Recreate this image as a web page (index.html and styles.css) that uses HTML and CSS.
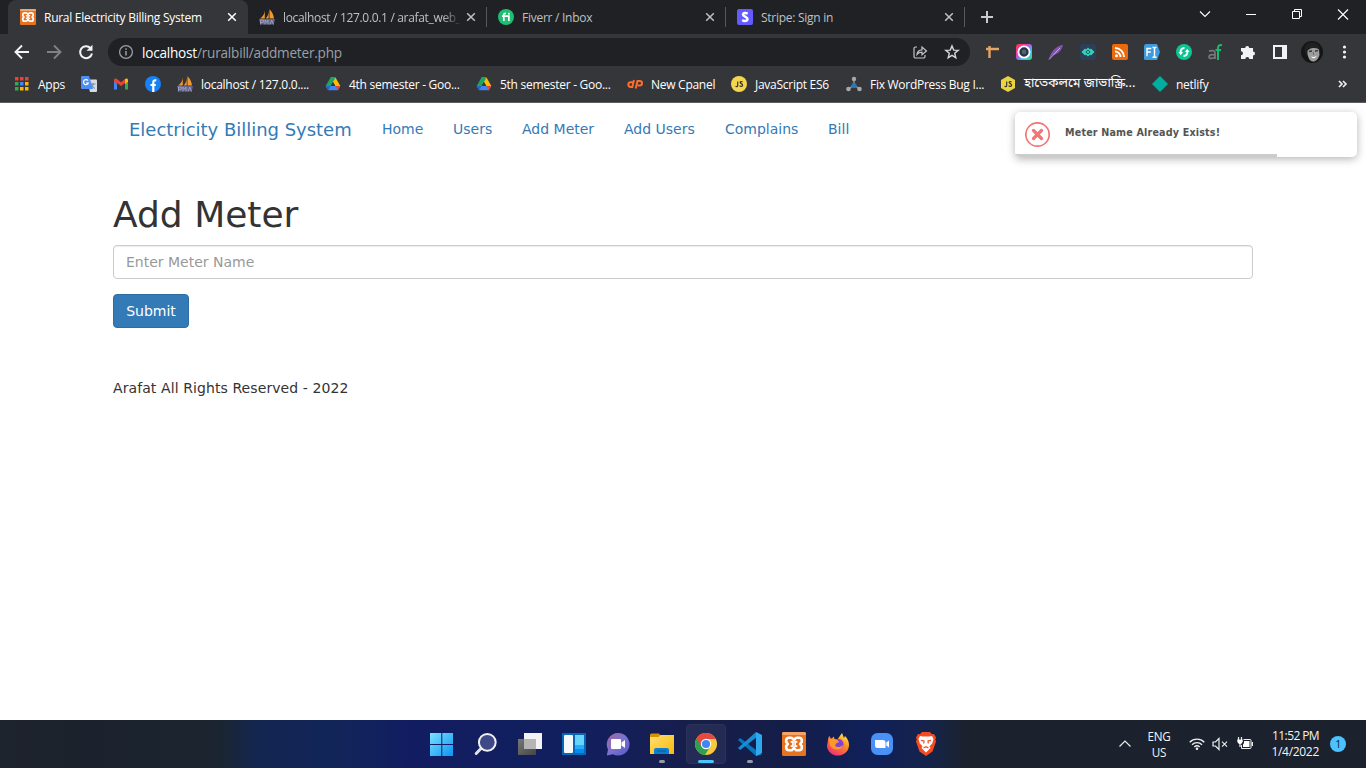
FILE: index.html
```html
<!DOCTYPE html>
<html lang="en">
<head>
<meta charset="utf-8">
<title>Rural Electricity Billing System</title>
<link rel="stylesheet" href="styles.css">
</head>
<body>
<svg class="defs" width="0" height="0">
  <defs>
    <linearGradient id="win" x1="0" y1="0" x2="1" y2="1"><stop offset="0" stop-color="#7be3ff"/><stop offset="1" stop-color="#0a94f2"/></linearGradient>
    <linearGradient id="chat" x1="0" y1="0" x2="1" y2="1"><stop offset="0" stop-color="#a4669a"/><stop offset=".5" stop-color="#7a72d0"/><stop offset="1" stop-color="#5058c8"/></linearGradient>
    <linearGradient id="folder" x1="0" y1="0" x2="1" y2="1"><stop offset="0" stop-color="#ffdf73"/><stop offset="1" stop-color="#f9b90c"/></linearGradient>
    <linearGradient id="fox" x1=".8" y1="0" x2=".2" y2="1"><stop offset="0" stop-color="#fff04a"/><stop offset=".4" stop-color="#ff8b22"/><stop offset="1" stop-color="#f0287a"/></linearGradient>
    <linearGradient id="cam" x1="0" y1="0" x2="1" y2="1"><stop offset="0" stop-color="#ff3b30"/><stop offset=".35" stop-color="#f235c8"/><stop offset=".65" stop-color="#32b8ff"/><stop offset="1" stop-color="#3fe07a"/></linearGradient>
    <linearGradient id="task" x1="0" y1="0" x2="1" y2="1"><stop offset="0" stop-color="#777"/><stop offset="1" stop-color="#444"/></linearGradient>
    <symbol id="xampp" viewBox="0 0 16 16"><rect width="16" height="16" rx="1" fill="#e8731f"/><rect width="16" height="2" rx="1" fill="#f6a366"/><path d="M8 5.500L7 4.300a1.500 1.500 0 0 0-1.200-.5H4.600a1.800 1.800 0 0 0-1.800 1.800v1L3.900 8l-1.100 1.400v1a1.800 1.800 0 0 0 1.800 1.800h1.200A1.500 1.500 0 0 0 7 11.700l1-1.200 1 1.200a1.500 1.500 0 0 0 1.200.5h1.200a1.800 1.800 0 0 0 1.800-1.800v-1L12.100 8l1.100-1.400v-1a1.800 1.800 0 0 0-1.800-1.800h-1.200a1.500 1.500 0 0 0-1.200.5z" fill="none" stroke="#fff" stroke-width="1.700" stroke-linejoin="round"/><path d="M5.800 6.600h1.500v2.800H5.800M10.200 6.600H8.700v2.800h1.500" fill="none" stroke="#fff" stroke-width="1.100"/></symbol>
    <symbol id="pma" viewBox="0 0 16 16"><path d="M5.800 1.500v8H1C4 7.500 5.500 5 5.800 1.500zM10.500.2c2.600 2.500 4.200 6 4.500 9.300h-4.500zM9.700 2v7.500H6.600C8.700 7.500 9.500 5 9.700 2z" fill="#f29a2e"/><path d="M0 10h16l-1.300 5.500H1.500z" fill="#62648c"/><path d="M1.500 15.500V11h2.800v2.300H1.500M6 15.500V11l1.500 2.200L9 11v4.500m2 0 1.700-4.500 1.800 4.500" fill="none" stroke="#a9aacb" stroke-width=".8"/></symbol>
    <symbol id="drive" viewBox="0 0 16 16"><path d="M5.500 1.500h5L15.300 10h-5L8 6z" fill="#fbbc04"/><path d="M3.200 10h12.100l-2.500 4.200H3.200L.7 10z" fill="#4285f4"/><path d="M5.500 1.500.7 10l2.500 4 2.400-4L8 6l2.500-4.500z" fill="#1ea362"/><path d="M10.400 10h4.900l-2.500 4.200z" fill="#ea4335"/><path d="M.7 10h4.900l-2.400 4.200z" fill="#2366d1"/><path d="M8 6.300 10.200 10H5.800z" fill="#35363a"/></symbol>
    <symbol id="close" viewBox="0 0 10 10"><path d="M1.200 1.200l7.600 7.600m0-7.600L1.200 8.800" stroke="currentColor" stroke-width="1.500" fill="none"/></symbol>
  </defs>
</svg>

<header class="browser">
  <div class="tabstrip">
    <div class="tab tab-active"><svg class="i16"><use href="#xampp"/></svg><span class="tab-title">Rural Electricity Billing System</span><svg class="tab-close"><use href="#close"/></svg></div>
    <div class="tab"><svg class="i16"><use href="#pma"/></svg><span class="tab-title tab-faded">localhost / 127.0.0.1 / arafat_web_</span><svg class="tab-close"><use href="#close"/></svg></div>
    <div class="tab"><svg class="i16" viewBox="0 0 16 16"><circle cx="8" cy="8" r="8" fill="#1dbf73"/><path d="M4 7.200h6.900V12M5.800 12V6c0-1.300.7-1.700 2.200-1.600" fill="none" stroke="#fff" stroke-width="1.700"/><circle cx="10.900" cy="4.700" r="1" fill="#fff"/></svg><span class="tab-title">Fiverr / Inbox</span><svg class="tab-close"><use href="#close"/></svg></div>
    <div class="tab"><svg class="i16" viewBox="0 0 16 16"><rect width="16" height="16" rx="2" fill="#635bff"/><path d="M10.700 4.600C8.800 3.800 6.100 3.700 6 5.500c0 2.200 4.600 1.900 4.500 4.500-.1 2.300-3.100 2.300-5.300 1.200" fill="none" stroke="#fff" stroke-width="2.500"/></svg><span class="tab-title">Stripe: Sign in</span><svg class="tab-close"><use href="#close"/></svg></div>
    <svg class="new-tab" viewBox="0 0 12 12"><path d="M6 0v12M0 6h12" stroke="#c8cacd" stroke-width="2"/></svg>
    <div class="window-controls">
      <svg viewBox="0 0 46 28"><path d="M18 11.500l5 5 5-5" fill="none" stroke="#fff" stroke-width="1.100"/></svg>
      <svg viewBox="0 0 46 28"><path d="M18 14.500h10" stroke="#fff"/></svg>
      <svg viewBox="0 0 46 28"><path d="M18.500 11.500h7v7h-7zM20.500 11.500v-2h7v7h-2" fill="none" stroke="#fff"/></svg>
      <svg viewBox="0 0 46 28"><path d="M18 9.500l10 10m0-10l-10 10" stroke="#fff" stroke-width="1.100"/></svg>
    </div>
  </div>

  <div class="toolbar">
    <div class="nav-buttons">
      <svg viewBox="0 0 32 28"><path d="M23 14H10M16 7.500L9.500 14l6.500 6.500" fill="none" stroke="#f1f3f4" stroke-width="1.900"/></svg>
      <svg viewBox="0 0 32 28"><path d="M9 14h13M16 7.500l6.500 6.500-6.500 6.500" fill="none" stroke="#808184" stroke-width="1.900"/></svg>
      <svg viewBox="0 0 32 28"><path d="M20.500 10A6 6 0 1 0 22 15.500" fill="none" stroke="#f1f3f4" stroke-width="2"/><path d="M22.500 6.800v6h-6z" fill="#f1f3f4"/></svg>
    </div>
    <div class="omnibox">
      <svg class="i16" viewBox="0 0 16 16"><circle cx="8" cy="8" r="6.400" fill="none" stroke="#9aa0a6" stroke-width="1.300"/><path d="M8 7v4.500M8 4.300v1.500" stroke="#9aa0a6" stroke-width="1.500"/></svg>
      <span class="url"><b>localhost</b>/ruralbill/addmeter.php</span>
      <svg class="i16" viewBox="0 0 16 16"><path d="M5 3H3.500A1.500 1.500 0 0 0 2 4.500v8A1.500 1.500 0 0 0 3.500 14h8a1.500 1.500 0 0 0 1.500-1.500V11M5 10.500C5.300 7.500 7 6 10 5.800V3l4.500 4-4.500 3.700V8.200C7.700 8.200 6.200 8.900 5 10.500z" fill="none" stroke="#c4c6c9" stroke-width="1.200"/></svg>
      <svg class="i16 star" viewBox="0 0 16 16"><path d="M8 1.900l1.700 4.200 4.500.3-3.500 2.900 1.100 4.400L8 11.300l-3.800 2.400 1.100-4.400-3.500-2.900 4.500-.3z" fill="none" stroke="#d5d7da" stroke-width="1.400"/></svg>
    </div>
    <div class="extensions">
      <svg viewBox="0 0 16 16"><path d="M2 5h13M5.500 2v12" stroke="#e6a366" stroke-width="2.400"/></svg>
      <svg viewBox="0 0 16 16"><rect width="16" height="16" rx="3" fill="url(#cam)"/><circle cx="8" cy="8" r="5.600" fill="#26344a" stroke="#fff" stroke-width="1.900"/><circle cx="8" cy="8" r="2.400" fill="#56616e"/></svg>
      <svg viewBox="0 0 16 16"><path d="M1 15.500C2 9 7 2.500 15 .8 14 6.500 9.500 11 4 11.300z" fill="#8453ad"/><path d="M1 15.500L12 4" stroke="#d0a8ec"/></svg>
      <svg viewBox="0 0 16 16"><rect width="16" height="16" rx="2" fill="#2b4058"/><path d="M5.500 5L2.500 8l3 3m5-6l3 3-3 3M8 4.500L4.500 8 8 11.500 11.500 8z" fill="none" stroke="#33dfbd" stroke-width="1.300"/><path d="M8 6.500L9.500 8 8 9.500 6.500 8z" fill="#33dfbd"/></svg>
      <svg viewBox="0 0 16 16"><rect width="16" height="16" rx="2" fill="#ec6a0c"/><path d="M3 7.500A5.500 5.500 0 0 1 8.500 13M3 4a9 9 0 0 1 9 9" fill="none" stroke="#fff" stroke-width="1.900"/><circle cx="4.500" cy="11.700" r="1.500" fill="#fff"/></svg>
      <svg viewBox="0 0 16 16"><path d="M1.500 0H13l3 8-3 8H1.500A1.500 1.500 0 0 1 0 14.500v-13z" fill="#3e9bdd"/><path d="M3 12.200V4.500h4.300M3 8h3.800M8.500 3.200c1.500 0 2 .8 2 1.500 0-.7.500-1.500 2-1.500m-2 1.500v7.600m-2 1c1.500 0 2-.4 2-1 0 .6.500 1 2 1" fill="none" stroke="#fff" stroke-width="1.400"/></svg>
      <svg viewBox="0 0 16 16"><circle cx="8" cy="8" r="8" fill="#0cc592"/><path d="M8.500 4C5.500 4 4.300 6 4.700 8.500M7.500 12c3 0 4.200-2 3.800-4.500" fill="none" stroke="#fff" stroke-width="1.900"/><path d="M2.500 8h4.600l-2.300 3.200zM8.900 8h4.600l-2.300-3.200z" fill="#fff"/></svg>
      <svg viewBox="0 0 16 16"><path d="M1 7.300c2.500-1.300 6-1 6 1.400V15m0-4C3.500 10.200 1 10.800 1 12.700c0 2.300 4 2.300 6 .3" fill="none" stroke="#77797c" stroke-width="1.700"/><path d="M14 1.300c-3.200-.7-4 .7-4 3V16M7.500 6H13" fill="none" stroke="#16ba6d" stroke-width="2"/></svg>
      <svg viewBox="0 0 16 16"><path d="M1 4h4.200a2 2 0 1 1 4 0H13v3.600a2 2 0 1 1 0 4V15H9.300a2 2 0 1 0-4 0H1v-3.700a2 2 0 1 0 0-4z" fill="#f1f3f4"/></svg>
      <svg viewBox="0 0 16 16"><path d="M2 2h12v12H2z" fill="none" stroke="#f1f3f4" stroke-width="2"/><path d="M10 2h4v12h-4z" fill="#f1f3f4"/></svg>
      <svg class="avatar" viewBox="0 0 22 22"><circle cx="11" cy="11" r="11" fill="#151515"/><path d="M6 8c2-2 9-3 12 0l.5 6c-1 4-4 7-7 6.500C8 20 6 14 6 8z" fill="#9d9d9d"/><path d="M4 11C2 3 8 1 12 1.500S19.500 5 19 10c-1-2-3-3-5.500-3S8 7.500 6.500 10l-.5 4z" fill="#202020"/><path d="M8 10.500l3-.5m3 0l3-.3" stroke="#333" stroke-width="1.300"/><path d="M12.500 11v3" stroke="#707070"/><path d="M10 15.500c2 .8 4 .5 5.500-.8-.8 2.800-3.500 3.600-5.500.8z" fill="#fff"/></svg>
      <svg viewBox="0 0 16 16"><circle cx="8.500" cy="3" r="1.600" fill="#f1f3f4"/><circle cx="8.500" cy="8" r="1.600" fill="#f1f3f4"/><circle cx="8.500" cy="13" r="1.600" fill="#f1f3f4"/></svg>
    </div>
  </div>

  <nav class="bookmarks">
    <a class="bm"><svg class="i16" viewBox="0 0 16 16"><path d="M1 1h3.500v3.500H1z M6 1h3.500v3.500H6z M11 1h3.500v3.500H11z" fill="#ea4335"/><path d="M1 6h3.500v3.500H1z M1 11h3.500v3.500H1z" fill="#34a853"/><path d="M6 6h3.500v3.500H6z" fill="#4285f4"/><path d="M11 6h3.500v3.500H11z M6 11h3.500v3.500H6z M11 11h3.500v3.500H11z" fill="#fbb606"/></svg><span>Apps</span></a>
    <a class="bm"><svg class="i16" viewBox="0 0 16 16"><path d="M6 3.500h9a1 1 0 0 1 1 1V15a1 1 0 0 1-1 1H9z" fill="#d8dadd"/><path d="M9.500 8h5M12 7v1c0 2-1 3.500-2 4.500m.5-4c.5 1.500 2 3 3.500 4" fill="none" stroke="#6c8da0"/><path d="M1 0h7l4 13H1a1 1 0 0 1-1-1V1a1 1 0 0 1 1-1z" fill="#4d8df5"/><path d="M7 4.600A2.500 2.500 0 1 0 7.300 7H5" fill="none" stroke="#fff" stroke-width="1.200"/></svg></a>
    <a class="bm"><svg class="i16" viewBox="0 0 16 16"><path d="M1 4v9.500h3V6z" fill="#4285f4"/><path d="M12 6v7.500h3V4z" fill="#34a853"/><path d="M1 4c0-1.500 1.500-2 3-1l4 3.200L12 3v4L8 10 4 7v1L1 5.700z" fill="#ea4335"/><path d="M12 3c1.500-1 3-.5 3 1v1.700L12 8z" fill="#fbbc04"/></svg></a>
    <a class="bm"><svg class="i16" viewBox="0 0 16 16"><circle cx="8" cy="8" r="8" fill="#1682f3"/><path d="M8.300 16V6.500c0-1.700.9-2.500 3-2.200M5.500 9h5.300" fill="none" stroke="#fff" stroke-width="2.200"/></svg></a>
    <a class="bm"><svg class="i16"><use href="#pma"/></svg><span>localhost / 127.0.0....</span></a>
    <a class="bm"><svg class="i16"><use href="#drive"/></svg><span>4th semester - Goo...</span></a>
    <a class="bm"><svg class="i16"><use href="#drive"/></svg><span>5th semester - Goo...</span></a>
    <a class="bm"><svg class="i16" viewBox="0 0 16 16"><path d="M6 6.200H3.700a2.300 2.300 0 0 0 0 4.700h1.600L7 4M8.700 12.500L10.500 5h2.200a2.300 2.300 0 0 1 0 4.600h-2" fill="none" stroke="#ff6c2c" stroke-width="2"/></svg><span>New Cpanel</span></a>
    <a class="bm"><svg class="i16" viewBox="0 0 16 16"><circle cx="8" cy="8" r="8" fill="#f4d64e"/><path d="M6.700 5.500v4c0 1.500-1.500 1.500-2 .5M11.500 6c-1-.8-2.500-.4-2.300.6.200 1.200 2.500.8 2.400 2.500-.1 1.500-2 1.500-3 .5" fill="none" stroke="#333" stroke-width="1.200"/></svg><span>JavaScript ES6</span></a>
    <a class="bm"><svg class="i16" viewBox="0 0 16 16"><path d="M8 3v6l-5.500 4M8 9l5.500 4" fill="none" stroke="#888c91" stroke-width="1.500"/><circle cx="8" cy="3" r="2.200" fill="#a6a9ac"/><circle cx="2.500" cy="13" r="2.300" fill="#a6a9ac"/><circle cx="13.500" cy="13" r="2.300" fill="#a6a9ac"/><circle cx="8" cy="9.500" r="2.600" fill="#2879b9"/></svg><span>Fix WordPress Bug I...</span></a>
    <a class="bm"><svg class="i16" viewBox="0 0 16 16"><path d="M8 0l7 4v8l-7 4-7-4V4z" fill="#ead341"/><path d="M6.700 5.500v4c0 1.500-1.500 1.500-2 .5M11.500 6c-1-.8-2.500-.4-2.300.6.200 1.200 2.500.8 2.400 2.500-.1 1.500-2 1.500-3 .5" fill="none" stroke="#333" stroke-width="1.200"/></svg><span class="bengali" lang="bn">হাতেকলমে জাভাস্ক্রি...</span></a>
    <a class="bm"><svg class="i16" viewBox="0 0 16 16"><path d="M8 0l8 8-8 8-8-8z" fill="#00ad9f"/></svg><span>netlify</span></a>
    <a class="bm"><svg class="more" viewBox="0 0 10 10"><path d="M1 2l3 3-3 3m4-6l3 3-3 3" fill="none" stroke="#f1f3f4" stroke-width="1.600"/></svg></a>
  </nav>
</header>

<main class="page">
  <div class="container">
    <nav class="navbar">
      <a class="brand">Electricity Billing System</a>
      <a class="nl-home">Home</a><a class="nl-users">Users</a><a class="nl-meter">Add Meter</a><a class="nl-add">Add Users</a><a class="nl-comp">Complains</a><a>Bill</a>
    </nav>
    <h1 class="title">Add Meter</h1>
    <form class="meter-form">
      <input class="field" type="text" placeholder="Enter Meter Name">
      <button class="submit" type="button">Submit</button>
    </form>
    <footer class="copyright">Arafat All Rights Reserved - 2022</footer>
  </div>
  <aside class="toast">
    <svg class="toast-icon" viewBox="0 0 26 26"><circle cx="12.500" cy="12.500" r="11.700" fill="none" stroke="#f27474" stroke-width="1.700"/><path d="M8.500 8.500l8 8m0-8l-8 8" stroke="#f27474" stroke-width="3.200" stroke-linecap="round"/></svg>
    <span class="toast-text">Meter Name Already Exists!</span>
    <div class="toast-progress"></div>
  </aside>
</main>

<footer class="taskbar">
  <div class="apps">
    <div class="app"><svg viewBox="0 0 24 24"><path d="M0 1h11.300v11H0zM12.300 1H23v11H12.300zM0 13h11.300v11H0zM12.300 13H23v11H12.300z" fill="url(#win)"/></svg></div>
    <div class="app"><svg viewBox="0 0 24 24"><path d="M7.500 16L2.200 21.500" stroke="#dfe2e6" stroke-width="3" stroke-linecap="round"/><circle cx="13.300" cy="10.300" r="8.400" fill="#404987" stroke="#eef0f2" stroke-width="2"/></svg></div>
    <div class="app"><svg viewBox="0 0 24 24"><path d="M6 1h18v16H6z" fill="#f3f3f3"/><path d="M0 7h18v16H0z" fill="url(#task)"/><path d="M6 7h12v10H6z" fill="#b5b5b5"/></svg></div>
    <div class="app"><svg viewBox="0 0 24 24"><rect y="1" width="24" height="22" rx="1" fill="#0768b8"/><rect x="2" y="3" width="9" height="18" rx="1" fill="#f5f7f9"/><path d="M13 3h9v10h-9z" fill="#66d4ff"/><path d="M13 13h9v8h-9z" fill="#078bec"/><path d="M13 13h9v4h-9z" fill="#20adff"/></svg></div>
    <div class="app"><svg viewBox="0 0 24 24"><path d="M12 1a11.300 11.300 0 1 1-5 21.300L.8 23.500 2 17.500A11.300 11.300 0 0 1 12 1z" fill="url(#chat)"/><rect x="5" y="7" width="10" height="10" rx="1" fill="#fff"/><path d="M15.500 10.500L19 8v8l-3.500-2.500z" fill="#fff"/></svg></div>
    <div class="app running"><svg viewBox="0 0 24 24"><path d="M0 3a1.500 1.500 0 0 1 1.500-1.500H9L11 4v3H0z" fill="#d99300"/><path d="M0 5h8.500l2-2H24v19H0z" fill="url(#folder)"/><path d="M4 22v-4a2 2 0 0 1 2-2h11a2 2 0 0 1 2 2v4z" fill="#0b7ed0"/><path d="M7 19h9" stroke="#0569ae" stroke-width="1.500"/></svg></div>
    <div class="app focused"><svg viewBox="0 0 24 24"><circle cx="12" cy="12" r="11" fill="#fbc73c"/><path d="M12 12L2.500 6.500A11 11 0 0 0 11 23l5.500-9z" fill="#2ca04f"/><path d="M2.500 6.500A11 11 0 0 1 21.800 7H12l-4.400 7.500z" fill="#e44a3f"/><circle cx="12" cy="12" r="5.200" fill="#fff"/><circle cx="12" cy="12" r="4.100" fill="#4285f4"/></svg></div>
    <div class="app running"><svg viewBox="0 0 24 24"><path d="M0 8l2.200-2L24 22.500 18 24z" fill="#0877bd"/><path d="M0 16l2.200 2L19 5 18 0z" fill="#168ed4"/><path d="M18 0l6 3v18l-6 3z" fill="#2fa9ee"/></svg></div>
    <div class="app"><svg viewBox="0 0 16 16"><use href="#xampp"/></svg></div>
    <div class="app"><svg viewBox="0 0 24 24"><path d="M2 8c0-2 .7-3 1.500-4L5 7l3-2.500.5 3L11 8l5-7 2 5 1-2c4 4 5 9 3 13.500C17 27 2 25 1 14z" fill="url(#fox)"/><circle cx="12.500" cy="12" r="5" fill="#8541d3"/><path d="M3 7c5-1 9 0 10 3l-3 1.500-1 2.500c3 2 6 1 8-1-1 6-11 6-13 0z" fill="#ff982b"/></svg></div>
    <div class="app"><svg viewBox="0 0 24 24"><rect x="1" y="1" width="22" height="22" rx="6.500" fill="#4990f7"/><path d="M5 8h8a2.500 2.500 0 0 1 2.500 2.500V16H7.500A2.500 2.500 0 0 1 5 13.500z" fill="#fff"/><path d="M16.300 10.500L19 8.500v7l-2.700-2z" fill="#fff"/></svg></div>
    <div class="app"><svg viewBox="0 0 24 24"><path d="M8 0h8l2 2.200 2-.2 2 3.500-.7 2 .7 2-3.500 10L12 24l-6.500-4.500L2 9.500l.7-2-.7-2L4 2l2 .2z" fill="#f64b20"/><path d="M9 4.500h6l3-.5 1.500 3-1.300 4.500-2.700 2.700 1 1.800L12 20.500 7.500 16l1-1.800-2.700-2.700L4.500 7 6 4z" fill="#fff"/><path d="M7 8.300l3 .7-.3 2.500M17 8.300l-3 .7.3 2.500M9.500 16l2.500-1.300 2.500 1.300" fill="none" stroke="#f64b20" stroke-width="1.200"/></svg></div>
  </div>
  <div class="tray">
    <svg class="tray-chev" viewBox="0 0 14 10"><path d="M1.500 7.500L7 2l5.500 5.500" fill="none" stroke="#eee" stroke-width="1.200"/></svg>
    <div class="lang">ENG<br>US</div>
    <svg class="tray-wifi" viewBox="0 0 16 14"><path d="M.7 5.200a10.200 10.200 0 0 1 14.600 0M3 7.700a7 7 0 0 1 10 0M5.300 10a4 4 0 0 1 5.400 0" fill="none" stroke="#eee" stroke-width="1.300"/><circle cx="8" cy="11.700" r="1.300" fill="#eee"/></svg>
    <svg class="tray-vol" viewBox="0 0 16 14"><path d="M1 5h2.500L7 1.500v11L3.500 9H1z" fill="none" stroke="#eee" stroke-width="1.200"/><path d="M10 4.700l5 5m0-5l-5 5" stroke="#eee" stroke-width="1.100"/></svg>
    <svg class="tray-bat" viewBox="0 0 17 14"><path d="M6.500 2.500H13a1 1 0 0 1 1 1v7a1 1 0 0 1-1 1H4.500V8" fill="none" stroke="#eee"/><path d="M7 4h5.500v6H6V7.500L7 6z" fill="#fff"/><path d="M15.300 5v4" stroke="#eee" stroke-width="1.400"/><path d="M1.500 0v3m3-3v3M3 6v4" stroke="#eee" stroke-width="1.200" fill="none"/><path d="M.3 2.500h5.400V5L4 7H2L.3 5z" fill="#fff"/></svg>
    <div class="clock"><div class="time">11:52 PM</div><div class="date">1/4/2022</div></div>
    <div class="count">1</div>
  </div>
</footer>
</body>
</html>
```
FILE: styles.css
```css
* { box-sizing: border-box; }
body {
  margin: 0;
  width: 1366px;
  height: 768px;
  overflow: hidden;
  display: flex;
  flex-direction: column;
  background: #fff;
  font-family: "Open Sans", "Noto Sans", sans-serif;
}
.defs { position: absolute; }
svg { display: block; flex: none; }
.i16 { width: 16px; height: 16px; }

/* Browser chrome */
.browser { flex: none; height: 103px; background: #35363a; border-bottom: 1px solid #5b5c60; }
.tabstrip { height: 34px; background: #202124; display: flex; padding-left: 8px; }
.tab {
  width: 239px;
  height: 34px;
  display: flex;
  align-items: center;
  padding: 0 10px 0 12px;
  color: #bdc1c6;
}
.tab + .tab { position: relative; }
.tab + .tab::after { content: ""; position: absolute; right: -1px; top: 7px; width: 1px; height: 20px; background: #55575b; }
.tab-active { width: 240px; padding-right: 11px; margin-right: -1px; background: #35363a; color: #fff; border-radius: 8px 8px 0 0; }
.tab-title {
  flex: 1;
  min-width: 0;
  margin: 0 10px 0 8px;
  white-space: nowrap;
  font-size: 12px;
  letter-spacing: -0.27px;
}
.tab-faded {
  margin-right: 5px;
  letter-spacing: -0.33px;
  -webkit-mask-image: linear-gradient(90deg, #000 160px, transparent 178px);
  mask-image: linear-gradient(90deg, #000 160px, transparent 178px);
}
.tab-close { width: 10px; height: 10px; }
.new-tab { width: 12px; height: 12px; margin: 11px 0 0 17px; }
.window-controls { display: flex; margin-left: auto; }
.window-controls svg { width: 46px; height: 28px; }

.toolbar { height: 36px; display: flex; align-items: center; padding-left: 6px; }
.nav-buttons { display: flex; width: 102px; }
.nav-buttons svg { width: 32px; height: 28px; }
.omnibox { width: 862px; height: 28px; border-radius: 14px; background: #202124; display: flex; align-items: center; padding: 0 10px; }
.url { flex: 1; margin-left: 8px; font-size: 13.600px; letter-spacing: -0.22px; color: #9aa0a6; }
.url b { font-weight: 400; color: #fff; }
.star { margin-left: 16px; }
.extensions { display: grid; grid-template-columns: repeat(12, 32px); place-items: center; margin-left: 6px; }
.extensions svg { width: 16px; height: 16px; }
.extensions .avatar { width: 22px; height: 22px; margin: -3px 0; }

.bookmarks {
  height: 28px;
  padding-left: 14px;
  display: grid;
  grid-template-columns: 67px 32px 32px 32px 148px 151px 151px 104px 115px 154px 152px 186px 20px;
  align-items: center;
}
.bm { display: flex; align-items: center; gap: 8px; white-space: nowrap; color: #fff; font-size: 12px; letter-spacing: -0.27px; }
.bengali { font-family: "Noto Sans Bengali", "Open Sans", sans-serif; font-size: 13px; line-height: 20px; letter-spacing: -0.1px; }
.more { width: 10px; height: 10px; }

/* Billing page */
.page {
  position: relative;
  flex: 1;
  display: flex;
  justify-content: center;
  color: #333;
  font: 14px/20px Verdana, "DejaVu Sans", sans-serif;
}
.container { width: 1140px; }
.navbar { height: 52px; padding-left: 16px; display: flex; align-items: center; color: #337ab7; }
.brand { width: 253px; padding-top: 2px; font-size: 18px; white-space: nowrap; letter-spacing: -0.02px; }
.nl-home { width: 71px; }
.nl-users { width: 69px; }
.nl-meter { width: 102px; }
.nl-add { width: 101px; }
.nl-comp { width: 103px; }
.title { margin: 40px 0 10px; font-size: 36px; line-height: 40px; font-weight: 400; }
.meter-form { display: flex; flex-direction: column; align-items: flex-start; gap: 15px; }
.field {
  width: 100%;
  height: 34px;
  padding: 6px 12px;
  border: 1px solid #ccc;
  border-radius: 4px;
  box-shadow: inset 0 1px 1px rgba(0, 0, 0, .075);
  font: inherit;
}
.field::placeholder { color: #999; opacity: 1; }
.submit { width: 76px; height: 34px; padding: 0; border: 1px solid #2e6da4; border-radius: 4px; background: #337ab7; color: #fff; font: inherit; }
.copyright { margin-top: 50px; letter-spacing: 0.09px; }

.toast {
  position: absolute;
  top: 9px;
  right: 9px;
  width: 342px;
  height: 45px;
  padding: 0 10px;
  display: flex;
  align-items: center;
  gap: 14px;
  overflow: hidden;
  background: #fff;
  border-radius: 5px;
  box-shadow: 0 2px 8px rgba(0, 0, 0, .3);
}
.toast-icon { width: 26px; height: 26px; }
.toast-text { color: #545454; font-size: 9.600px; font-weight: 700; margin-top: -4px; letter-spacing: 0.17px; }
.toast-progress { position: absolute; left: 0; bottom: 0; width: 262px; height: 3px; background: #ccc; }

/* Taskbar */
.taskbar {
  flex: none;
  height: 48px;
  display: flex;
  padding-left: 420px;
  color: #f3f3f3;
  background: linear-gradient(90deg, #1e232c 0, #1b222d 90px, #1b2530 220px, #132650 255px, #12255a 340px, #111d61 410px, #121f5c 600px, #171e4a 700px, #141d48 790px, #10205a 870px, #15234a 930px, #1b222e 965px, #1b212d 1366px);
}
.apps { display: flex; }
.app { position: relative; width: 44px; height: 48px; display: grid; place-items: center; }
.app svg { width: 24px; height: 24px; }
.focused::before { content: ""; position: absolute; inset: 4px 2px; border: 1px solid #2c3258; border-radius: 4px; background: rgba(255, 255, 255, .06); }
.focused svg { position: relative; }
.focused::after, .running::after { content: ""; position: absolute; bottom: 5px; width: 6px; height: 3px; border-radius: 2px; background: #9699a8; }
.focused::after { width: 16px; background: #4cc2ff; }
.tray { display: flex; align-items: center; margin-left: auto; padding-right: 20px; font-size: 12px; line-height: 16px; letter-spacing: -0.3px; }
.tray-chev { width: 14px; height: 10px; }
.lang { width: 34px; margin: 0 13px 0 10px; text-align: center; font-size: 11.700px; }
.tray-wifi { width: 16px; height: 14px; }
.tray-vol { width: 16px; height: 14px; margin-left: 7px; }
.tray-bat { width: 17px; height: 14px; margin-left: 9px; }
.clock { width: 65px; text-align: right; }
.time { letter-spacing: -0.600px; }
.count { width: 16px; height: 16px; margin-left: 11px; border-radius: 50%; background: #4cc2ff; color: #102030; text-align: center; font-size: 10.500px; }
```
